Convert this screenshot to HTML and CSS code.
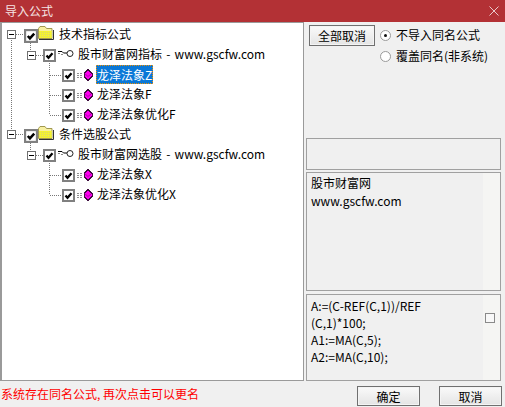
FILE: index.html
```html
<!DOCTYPE html>
<html lang="zh">
<head>
<meta charset="utf-8">
<title>导入公式</title>
<link rel="stylesheet" href="styles.css">
</head>
<body>
<svg width="0" height="0" class="defs">
  <symbol id="chk" viewBox="0 0 13 13"><rect x="1" y="1" width="11" height="11" fill="#fff" stroke="#808080" stroke-width="2"/><path d="M3.500 6.500l2 2.200 4-4.400" fill="none" stroke="#000" stroke-width="2.300"/></symbol>
  <symbol id="minus" viewBox="0 0 9 9"><rect x=".5" y=".5" width="8" height="8" fill="#fff" stroke="#707070"/><path d="M2 4.500h5" stroke="#000"/></symbol>
  <symbol id="folder" viewBox="0 0 16 14"><path d="M.5 12.500V2.500l1.500-2h5l1.500 2h5.500v10z" fill="#f8f0a0" stroke="#a09850"/><path d="M1 5h13v7H1z" fill="#f4f230"/><path d="M1 6.500h13M1 8.500h13M1 10.500h13" stroke="#d8d870" stroke-dasharray="1 1"/><path d="M1 13.500h14.500V4" fill="none" stroke="#333"/></symbol>
  <symbol id="key" viewBox="0 0 16 9"><path d="M0 2.500h4l1.500 1.500h4" fill="none" stroke="#000"/><path d="M0 4.500h2M3 5.500h2" stroke="#888"/><circle cx="12" cy="4.500" r="3" fill="#fff" stroke="#222"/></symbol>
  <symbol id="gem" viewBox="0 0 16 12"><path d="M0 4.500h6M0 6.500h6M0 8.500h6" stroke="#909090" stroke-dasharray="2 1"/><path d="M11 .5l4 4v3L11 11.500l-4-4v-3z" fill="#ff00f0" stroke="#401040" shape-rendering="crispEdges"/><path d="M7.500 4.500l3.500 3 3.500-3" fill="none" stroke="#900090" stroke-width=".7"/></symbol>
</svg>
<main class="win">
  <header class="title"><span>导入公式</span><svg class="close" width="10" height="10" viewBox="0 0 10 10"><path d="M.5.500l9 9M9.500.500l-9 9" stroke="#e9c9ca" fill="none"/></svg></header>
  <div class="body">
    <section class="tree">
      <svg class="lines" width="120" height="200" viewBox="0 0 120 200">
        <path d="M11.500 16V109M16 12.500h8M30.500 21v8M36 33.500h7M49.500 41V93M50 53.500h12M50 73.500h12M50 93.500h12" class="ln"/>
        <path d="M16 112.500h8M30.500 121v8M36 133.500h7M49.500 141V173M50 153.500h12M50 173.500h12" class="ln"/>
      </svg>
      <div class="row l1"><svg class="exp"><use href="#minus"/></svg><svg class="ck"><use href="#chk"/></svg><svg class="fld"><use href="#folder"/></svg><span class="lbl">技术指标公式</span></div>
      <div class="row l2"><svg class="exp"><use href="#minus"/></svg><svg class="ck"><use href="#chk"/></svg><svg class="ky"><use href="#key"/></svg><span class="lbl">股市财富网指标 - www.gscfw.com</span></div>
      <div class="row l3"><svg class="ck"><use href="#chk"/></svg><svg class="gm"><use href="#gem"/></svg><span class="lbl sel">龙泽法象Z</span></div>
      <div class="row l3"><svg class="ck"><use href="#chk"/></svg><svg class="gm"><use href="#gem"/></svg><span class="lbl">龙泽法象F</span></div>
      <div class="row l3"><svg class="ck"><use href="#chk"/></svg><svg class="gm"><use href="#gem"/></svg><span class="lbl">龙泽法象优化F</span></div>
      <div class="row l1"><svg class="exp"><use href="#minus"/></svg><svg class="ck"><use href="#chk"/></svg><svg class="fld"><use href="#folder"/></svg><span class="lbl">条件选股公式</span></div>
      <div class="row l2"><svg class="exp"><use href="#minus"/></svg><svg class="ck"><use href="#chk"/></svg><svg class="ky"><use href="#key"/></svg><span class="lbl">股市财富网选股 - www.gscfw.com</span></div>
      <div class="row l3"><svg class="ck"><use href="#chk"/></svg><svg class="gm"><use href="#gem"/></svg><span class="lbl">龙泽法象X</span></div>
      <div class="row l3"><svg class="ck"><use href="#chk"/></svg><svg class="gm"><use href="#gem"/></svg><span class="lbl">龙泽法象优化X</span></div>
    </section>
    <aside class="side">
      <div class="opts">
        <button class="btn all">全部取消</button>
        <div class="radios">
          <div class="radio"><i class="dot on"></i>不导入同名公式</div>
          <div class="radio"><i class="dot"></i>覆盖同名(非系统)</div>
        </div>
      </div>
      <div class="box empty"></div>
      <div class="box info"><div class="inner">股市财富网<br>www.gscfw.com</div></div>
      <div class="box code"><div class="inner">A:=(C-REF(C,1))/REF<br>(C,1)*100;<br>A1:=MA(C,5);<br>A2:=MA(C,10);</div><i class="sq"></i></div>
    </aside>
  </div>
  <footer class="foot">
    <span class="msg">系统存在同名公式, 再次点击可以更名</span>
    <button class="btn act ok">确定</button>
    <button class="btn act">取消</button>
  </footer>
</main>
</body>
</html>
```
FILE: styles.css
```css
* { box-sizing: border-box; }
html, body { margin: 0; padding: 0; }
body { width: 505px; height: 407px; overflow: hidden; background: #f0f0f0; font: 12px/20px "Noto Sans CJK SC", "Noto Sans", sans-serif; color: #000; }
.defs { position: absolute; }
.win { width: 505px; height: 407px; display: flex; flex-direction: column; }
.title { height: 22px; flex: none; background: #b33135; color: #f5e4e4; display: flex; align-items: center; justify-content: space-between; padding: 0 6px 1px 5px; font-size: 12px; }
.body { height: 359px; flex: none; display: flex; }
.tree { position: relative; width: 304px; flex: none; background: #fff; border: 1px solid #9a9a9a; border-left: 2px solid #9a9a9a; padding-top: 1px; }
.lines { position: absolute; left: -2px; top: -1px; overflow: visible; }
.ln { fill: none; stroke: #777; stroke-dasharray: 1 1; }
.row { position: relative; display: flex; align-items: center; height: 20px; }
.l1 { padding-left: 5px; }
.l2 { padding-left: 25px; }
.l3 { padding-left: 60px; }
.exp { width: 9px; height: 9px; flex: none; }
.l1 .exp { margin-right: 8px; }
.l2 .exp { margin: 2px 7px 0 0; }
.ck { width: 13px; height: 13px; flex: none; margin-top: 3px; }
.l1 .ck { width: 14px; height: 14px; }
.fld { width: 16px; height: 14px; margin: -2px 5px 0 0; flex: none; }
.ky { width: 16px; height: 9px; margin: -2px 4px 0 2px; flex: none; }
.gm { width: 16px; height: 12px; margin: 1px 4px 0 2px; flex: none; }
.lbl { white-space: nowrap; line-height: 18px; word-spacing: 1.500px; }
.sel { background: #0a78d7; color: #fff; outline: 1px dotted #f09000; outline-offset: -1px; margin-left: -1px; padding: 0 1px; line-height: 19px; }
.side { flex: 1; padding: 3px 4px 0 2px; display: flex; flex-direction: column; min-width: 0; }
.opts { display: flex; height: 113px; padding-left: 3px; flex: none; gap: 5px; }
.btn { font: inherit; color: #000; padding: 0; background: linear-gradient(#fafafa, #e4e4e4); border: 1px solid #707070; }
.all { width: 66px; height: 21px; box-shadow: inset 0 0 0 1px #f4f4f4; }
.radios { display: flex; flex-direction: column; gap: 1px; }
.radio { display: flex; align-items: center; height: 20px; white-space: nowrap; }
.dot { width: 11px; height: 11px; border-radius: 50%; background: #fff; border: 1px solid #9a9a9a; margin-right: 5px; flex: none; position: relative; }
.dot.on::after { content: ""; position: absolute; left: 3px; top: 3px; width: 3px; height: 3px; border-radius: 50%; background: #111; }
.box { border: 1px solid #a0a0a0; flex: none; }
.empty { height: 32px; margin-bottom: 2px; }
.info { height: 119px; margin-bottom: 3px; background: #f5f5f3; }
.code { height: 87px; background: #f5f5f3; position: relative; }
.inner { width: 176px; height: 100%; background: #f0f0f0; padding: 1px 0 0 4px; line-height: 18px; white-space: nowrap; }
.code .inner { padding-top: 2px; line-height: 17px; }
.sq { position: absolute; right: 5px; top: 18px; width: 10px; height: 10px; border: 1px solid #8a8a8a; background: #f8f8f8; }
.foot { flex: 1; display: flex; align-items: center; padding: 0 3px 0 1px; }
.msg { color: #f00; flex: 1; white-space: nowrap; }
.act { width: 63px; height: 20px; margin-top: 4px; box-shadow: inset 0 0 0 1px #f4f4f4; }
.ok { margin-right: 19px; }
```
